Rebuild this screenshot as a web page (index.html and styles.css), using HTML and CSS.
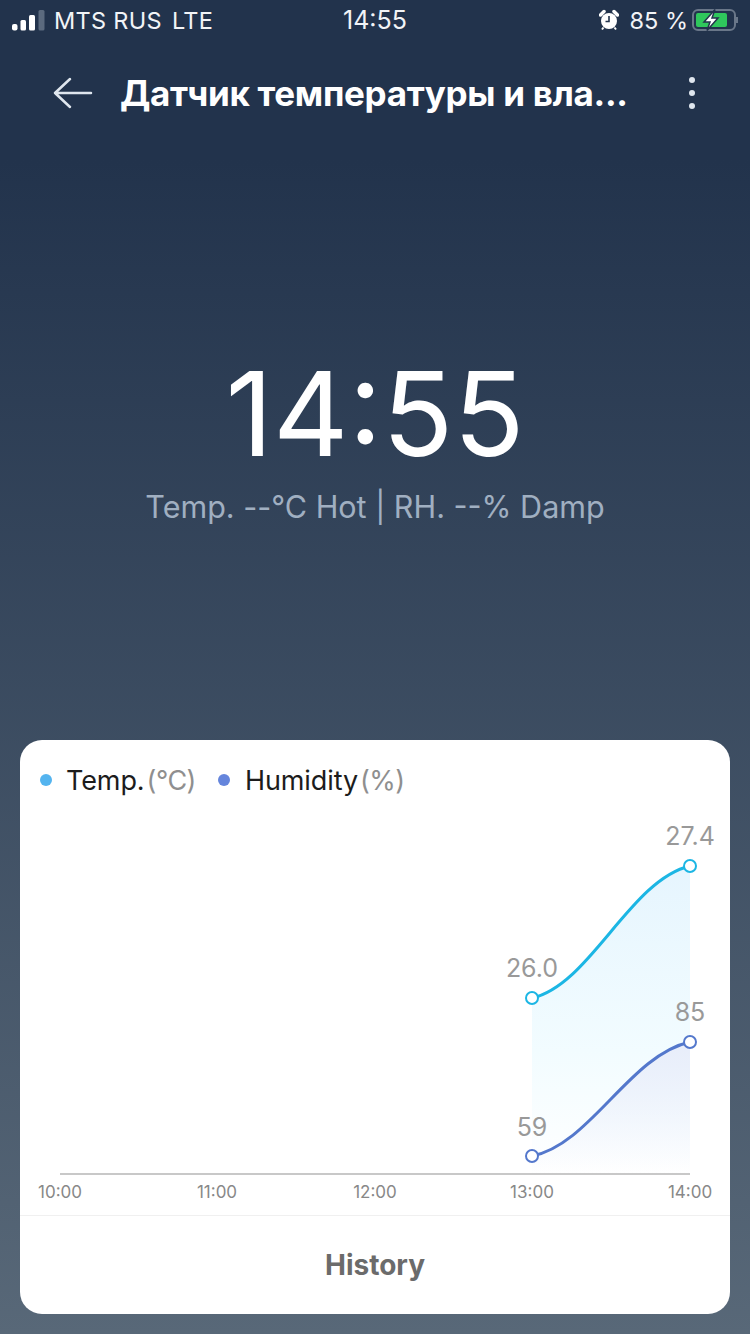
FILE: index.html

```html
<html>
  <head>
    <meta charset="utf-8">
    <link rel="stylesheet" href="styles.css">
  </head>
  <body>
    <div class="status">
      <div class="status-left">
        <svg class="signal" width="34" height="21" viewBox="0 0 34 21">
          <rect x="0" y="14" width="5.500" height="6.500" rx="2" fill="#fff"/>
          <rect x="8.500" y="10" width="5.500" height="10.500" rx="1.500" fill="#fff"/>
          <rect x="17" y="5" width="6" height="15.500" rx="1.500" fill="#fff"/>
          <rect x="26.500" y="0" width="6" height="20.500" rx="1.500" fill="#5b6a7e"/>
        </svg>
        <span>MTS RUS</span>
        <span>LTE</span>
      </div>
      <div class="status-time">14:55</div>
      <div class="status-right">
        <svg width="20" height="22" viewBox="0 0 20 22">
          <circle cx="10" cy="12" r="8" fill="#fff"/>
          <path d="M1.500 6 L5 2.500 M18.500 6 L15 2.500" stroke="#fff" stroke-width="3.500" stroke-linecap="round"/>
          <path d="M10 7 V12.500 H6.500" stroke="#22334c" stroke-width="1.600" fill="none"/>
          <path d="M4.500 18.500 L3 20.500 M15.500 18.500 L17 20.500" stroke="#fff" stroke-width="2"/>
        </svg>
        <span>85 %</span>
        <svg width="46" height="22" viewBox="0 0 46 22">
          <rect x="1" y="1" width="42" height="20" rx="5" fill="none" stroke="#6a7789" stroke-width="2"/>
          <rect x="4" y="4" width="31" height="14" rx="2" fill="#2fc75c"/>
          <path d="M45 8 V14" stroke="#6a7789" stroke-width="2"/>
          <path d="M23 0.500 L12 13 H18 L15 21.500 L26 9 H20 Z" fill="#fff" stroke="#22334c" stroke-width="1.500"/>
        </svg>
      </div>
    </div>

    <div class="header">
      <svg class="back" width="40" height="32" viewBox="0 0 40 32">
        <path d="M38 16 H2 M17 2 L2 16 L17 30" fill="none" stroke="#dfe6ee" stroke-width="2.500" stroke-linecap="round" stroke-linejoin="round"/>
      </svg>
      <div class="title">Датчик температуры и вла...</div>
      <div class="more"><i></i><i></i><i></i></div>
    </div>

    <div class="now">
      <div class="clock">14:55</div>
      <div class="reading">Temp. --°C Hot | RH. --% Damp</div>
    </div>

    <div class="card">
      <div class="legend">
        <i class="dot dot-temp"></i>
        <span>Temp.<em>(°C)</em></span>
        <i class="dot dot-hum"></i>
        <span>Humidity<em>(%)</em></span>
      </div>
      <svg class="chart" width="710" height="405" viewBox="20 810 710 405">
        <defs>
          <linearGradient id="fillTemp" x1="0" y1="0" x2="0" y2="1">
            <stop offset="0" stop-color="#e6f5fe"/>
            <stop offset="0.6" stop-color="#f2fcff"/>
            <stop offset="1" stop-color="#ffffff"/>
          </linearGradient>
          <linearGradient id="fillHum" x1="0" y1="0" x2="0" y2="1">
            <stop offset="0" stop-color="#e8edfa"/>
            <stop offset="1" stop-color="#e8edfa" stop-opacity="0"/>
          </linearGradient>
        </defs>
        <path d="M532 998 C590 985 630 880 690 866 V1174 H532 Z" fill="url(#fillTemp)"/>
        <path d="M532 1156 C590 1145 630 1055 690 1042 V1174 H532 Z" fill="url(#fillHum)"/>
        <line x1="60" y1="1174" x2="690" y2="1174" stroke="#c8c8c8" stroke-width="2"/>
        <path d="M532 998 C590 985 630 880 690 866" fill="none" stroke="#1cb6e4" stroke-width="3"/>
        <path d="M532 1156 C590 1145 630 1055 690 1042" fill="none" stroke="#5478cc" stroke-width="3"/>
        <circle cx="532" cy="998" r="6" fill="#fff" stroke="#1cb6e4" stroke-width="2"/>
        <circle cx="690" cy="866" r="6" fill="#fff" stroke="#1cb6e4" stroke-width="2"/>
        <circle cx="532" cy="1156" r="6" fill="#fff" stroke="#5478cc" stroke-width="2"/>
        <circle cx="690" cy="1042" r="6" fill="#fff" stroke="#5478cc" stroke-width="2"/>
        <text class="val" x="532" y="977">26.0</text>
        <text class="val" x="690" y="845">27.4</text>
        <text class="val" x="532" y="1136">59</text>
        <text class="val" x="690" y="1021">85</text>
        <text class="tick" x="60" y="1198">10:00</text>
        <text class="tick" x="217" y="1198">11:00</text>
        <text class="tick" x="375" y="1198">12:00</text>
        <text class="tick" x="532" y="1198">13:00</text>
        <text class="tick" x="690" y="1198">14:00</text>
      </svg>
      <div class="history">History</div>
    </div>
  </body>
</html>
```

FILE: styles.css

```css
* {
  margin: 0;
  box-sizing: border-box;
}

body {
  width: 750px;
  height: 1334px;
  overflow: hidden;
  font-family: Inter, "Noto Sans", sans-serif;
  color: #fff;
  background: linear-gradient(#22334c 0, #22334c 12%, #586878 100%);
  display: flex;
  flex-direction: column;
}

/* status bar */
.status {
  height: 40px;
  padding: 0 12px;
  display: flex;
  align-items: center;
  justify-content: space-between;
  font-size: 23.500px;
  color: #f2f4f7;
}

.status-left {
  width: 260px;
  display: flex;
  align-items: center;
  gap: 10px;
  letter-spacing: 0.3px;
}

.signal {
  margin-right: -2px;
}

.status-time {
  font-size: 25px;
}

.status-right {
  width: 260px;
  display: flex;
  align-items: center;
  justify-content: flex-end;
  gap: 10px;
}

.status-right svg:last-child {
  margin-left: -6px;
}

/* header */
.header {
  height: 106px;
  padding: 0 55px 0 53px;
  display: flex;
  align-items: center;
}

.back {
  flex: none;
  margin-right: 27px;
}

.title {
  flex: 1;
  font-size: 35px;
  font-weight: 700;
  white-space: nowrap;
  letter-spacing: -0.3px;
}

.more {
  display: flex;
  flex-direction: column;
  gap: 7px;
}

.more i {
  width: 6px;
  height: 6px;
  border-radius: 50%;
  background: #dfe6ee;
}

/* clock */
.now {
  height: 594px;
  padding-top: 198px;
  text-align: center;
}

.clock {
  font-size: 117px;
  font-weight: 400;
  line-height: 140px;
}

.reading {
  margin-top: 3px;
  font-size: 30.500px;
  line-height: 40px;
  color: #a0afc1;
}

/* card */
.card {
  margin: 0 20px;
  height: 574px;
  background: #fff;
  border-radius: 22px;
  color: #1c1c1c;
  display: flex;
  flex-direction: column;
}

.legend {
  height: 70px;
  padding: 10px 0 0 20px;
  display: flex;
  align-items: center;
  font-size: 27px;
  letter-spacing: -0.1px;
}

.legend em {
  font-style: normal;
  color: #8f8f8f;
  margin-left: 2px;
  letter-spacing: -0.5px;
}

.dot {
  width: 12px;
  height: 12px;
  border-radius: 50%;
  margin-right: 14px;
}

.dot-temp {
  background: #54b4ef;
}

.dot-hum {
  background: #6585dc;
  margin-left: 22px;
  margin-right: 15px;
}

.chart {
  display: block;
  flex: none;
}

.val {
  font-size: 25px;
  fill: #999;
  text-anchor: middle;
}

.tick {
  font-size: 17px;
  fill: #888;
  text-anchor: middle;
}

.history {
  flex: 1;
  border-top: 1px solid #f0f0f0;
  display: flex;
  align-items: center;
  justify-content: center;
  font-size: 28px;
  font-weight: 700;
  color: #6b6b6b;
}
```
